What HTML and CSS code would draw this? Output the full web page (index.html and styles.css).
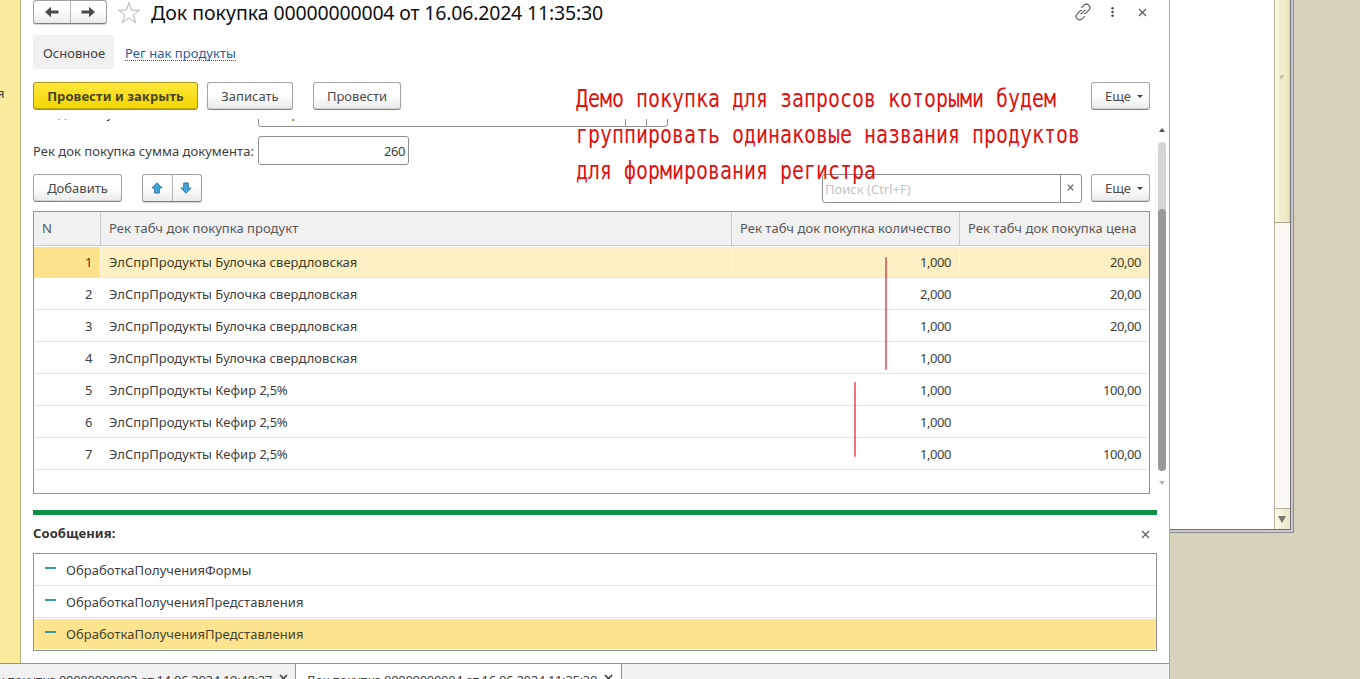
FILE: index.html
```html
<!DOCTYPE html>
<html lang="ru">
<head>
<meta charset="utf-8">
<title>Док покупка</title>
<link rel="stylesheet" href="styles.css">
</head>
<body>
<div class="desktop">
  <div class="app">
    <div class="app-main">
      <aside class="side"><span>я</span></aside>
      <main class="form">
        <header class="title-row">
          <div class="pair nav">
            <button><svg width="16" height="12" viewBox="0 0 16 12"><path d="M1 6 7 .8v3.700h7.500v3H7v3.700z"/></svg></button>
            <button><svg width="16" height="12" viewBox="0 0 16 12"><path d="M15 6 9 .8v3.700H1.500v3H9v3.700z"/></svg></button>
          </div>
          <svg class="star" width="24" height="24" viewBox="0 0 24 24"><path d="M12 1.500 14.600 9.200H22.600L16.200 14 18.700 21.800 12 17 5.300 21.800 7.800 14 1.400 9.200H9.400z"/></svg>
          <h1>Док покупка <span>00000000004 от 16.06.2024 11:35:30</span></h1>
          <div class="tools">
            <svg width="18" height="18" viewBox="0 0 18 18" class="line"><path d="M7.200 4.800 10 2.200a3.300 3.300 0 0 1 4.900.1 3.300 3.300 0 0 1 .1 4.600l-2.800 2.900q-.8.8-2.200.9M10.800 13.200 8 15.800a3.300 3.300 0 0 1-4.900-.1 3.300 3.300 0 0 1-.1-4.600l2.800-2.900q.8-.8 2.200-.9M6.700 11.300l4.600-4.600"/></svg>
            <svg width="6" height="14" viewBox="0 0 6 14"><circle cx="3" cy="2.500" r="1.500"/><circle cx="3" cy="7" r="1.500"/><circle cx="3" cy="11.500" r="1.500"/></svg>
            <svg width="9" height="9" viewBox="0 0 9 9" class="line"><path d="M1 1l7 7M8 1 1 8"/></svg>
          </div>
        </header>
        <nav class="sections"><span class="current">Основное</span><a>Рег нак продукты</a></nav>
        <div class="commands">
          <button class="btn primary">Провести и закрыть</button>
          <button class="btn write">Записать</button>
          <button class="btn post">Провести</button>
          <button class="btn more">Еще<i class="caret"></i></button>
        </div>
        <div class="scroll-area">
          <div class="body">
            <div class="cut">
              <span class="cut-label">Рек док покупка:</span>
              <div class="cut-field"><span>Контрагент</span><i></i><i></i></div>
            </div>
            <div class="field"><label>Рек док покупка сумма документа:</label><div class="input">260</div></div>
            <div class="table-tools">
              <button class="btn add">Добавить</button>
              <div class="pair move">
                <button><svg width="12" height="12" viewBox="0 0 13 13"><path d="M6.500 .8 12 6.500H9v5.500H4V6.500H1z"/></svg></button>
                <button><svg width="12" height="12" viewBox="0 0 13 13"><path d="M6.500 12.200 12 6.500H9V1H4v5.500H1z"/></svg></button>
              </div>
              <div class="search"><span>Поиск (Ctrl+F)</span><b><svg width="7" height="7" viewBox="0 0 7 7" class="line"><path d="M.7.7l5.600 5.600M6.300.7.7 6.300"/></svg></b></div>
              <button class="btn more">Еще<i class="caret"></i></button>
            </div>
            <div class="table">
              <div class="tr head"><div>N</div><div>Рек табч док покупка продукт</div><div>Рек табч док покупка количество</div><div>Рек табч док покупка цена</div></div>
              <div class="tr active"><div>1</div><div>ЭлСпрПродукты Булочка свердловская</div><div>1,000</div><div>20,00</div></div>
              <div class="tr"><div>2</div><div>ЭлСпрПродукты Булочка свердловская</div><div>2,000</div><div>20,00</div></div>
              <div class="tr"><div>3</div><div>ЭлСпрПродукты Булочка свердловская</div><div>1,000</div><div>20,00</div></div>
              <div class="tr"><div>4</div><div>ЭлСпрПродукты Булочка свердловская</div><div>1,000</div><div></div></div>
              <div class="tr"><div>5</div><div>ЭлСпрПродукты Кефир <span>2,5%</span></div><div>1,000</div><div>100,00</div></div>
              <div class="tr"><div>6</div><div>ЭлСпрПродукты Кефир <span>2,5%</span></div><div>1,000</div><div></div></div>
              <div class="tr"><div>7</div><div>ЭлСпрПродукты Кефир <span>2,5%</span></div><div>1,000</div><div>100,00</div></div>
            </div>
          </div>
          <div class="scrollbar"><i class="up"></i><div class="track"><div class="thumb"></div></div><i class="down"></i></div>
        </div>
        <section class="messages">
          <div class="messages-head"><b>Сообщения:</b><svg width="9" height="9" viewBox="0 0 9 9" class="line"><path d="M1 1l7 7M8 1 1 8"/></svg></div>
          <div class="list">
            <div class="msg"><i></i>ОбработкаПолученияФормы</div>
            <div class="msg"><i></i>ОбработкаПолученияПредставления</div>
            <div class="msg selected"><i></i>ОбработкаПолученияПредставления</div>
          </div>
        </section>
      </main>
    </div>
    <footer class="tabs">
      <div class="tab first"><span>Док покупка 00000000003 от 14.06.2024 19:48:27</span><svg width="9" height="9" viewBox="0 0 9 9"><path d="M1 1l7 7M8 1 1 8"/></svg></div>
      <div class="tab open"><span>Док покупка 00000000004 от 16.06.2024 11:35:30</span><svg width="9" height="9" viewBox="0 0 9 9"><path d="M1 1l7 7M8 1 1 8"/></svg></div>
    </footer>
  </div>
  <div class="back-window">
    <div class="back-inner"><div class="old-scroll"><div class="old-thumb"><i></i></div><div class="old-arrow"><i></i></div></div></div>
  </div>
  <p class="note">Демо покупка для запросов которыми будем<br>группировать одинаковые названия продуктов<br>для формирования регистра</p>
  <i class="mark mark-a"></i><i class="mark mark-b"></i>
</div>
</body>
</html>
```

FILE: styles.css
```css
* { box-sizing: border-box; }
body { margin: 0; overflow: hidden; font: 13px/18px "Noto Sans", sans-serif; color: #404040; }
button { font: inherit; color: inherit; padding: 0; margin: 0; }
svg { display: block; flex: none; fill: #4a4a4a; }
.line { fill: none; stroke: #555; stroke-width: 1.1; }
.desktop { position: relative; display: flex; width: 1360px; height: 679px; overflow: hidden; background: #d7d2bb; }

.app { display: flex; flex-direction: column; width: 1170px; height: 679px; flex: none; background: #fff; border-right: 1px solid #b5aa74; overflow: hidden; }
.app-main { display: flex; height: 663px; flex: none; }
.side { width: 21px; padding-top: 84px; background: #faec9e; border-right: 1px solid #b5ad78; overflow: hidden; }
.side span { display: block; width: 8px; margin-left: -3px; }
.form { display: flex; flex-direction: column; width: 1148px; padding-left: 12px; }

.title-row { display: flex; height: 25px; }
.pair { display: flex; border: 1px solid #a0a0a0; border-bottom-color: #808080; border-radius: 3px; background: linear-gradient(#fff 40%, #ebebeb); box-shadow: 0 1px 0 #d5d5d5; }
.pair button { flex: 1; display: flex; align-items: center; justify-content: center; border: 0; background: none; }
.pair button + button { border-left: 1px solid #b4b4b4; }
.nav { width: 74px; height: 24px; }
.star { margin: 1px 0 0 10px; fill: none; stroke: #b5b5b5; stroke-width: 1; }
h1 { margin: 0 0 0 10px; font-size: 19.5px; line-height: 26px; font-weight: 400; color: #111; white-space: nowrap; }
h1 span { letter-spacing: -.18px; }
.tools { display: flex; align-items: center; margin-left: auto; margin-right: 22px; height: 24px; gap: 17px; }
.tools svg:nth-child(2) { width: 5px; margin-left: 1px; }
.tools svg:last-child { margin-left: 6px; }

.sections { display: flex; align-items: center; height: 34px; margin-top: 10px; }
.current { width: 81px; height: 34px; line-height: 36px; text-align: center; padding-left: 1px; background: #f1f1f1; border-radius: 3px; }
.sections a { margin: 3px 0 0 11px; line-height: 14px; letter-spacing: .05px; color: #2d5c96; border-bottom: 1px dotted #2d5c96; }

.commands { display: flex; margin-top: 13px; width: 1117px; height: 28px; }
.btn { height: 28px; border: 1px solid #a5a5a5; border-bottom-color: #858585; border-radius: 3px; background: linear-gradient(#fff 45%, #ebebeb); box-shadow: inset 0 -1px 0 #d2d2d2; color: #4b4b4b; white-space: nowrap; }
.primary { width: 165px; font-weight: 700; letter-spacing: .08px; color: #4a4416; background: linear-gradient(#ffe83c, #f2d500); border-color: #a4941c; box-shadow: inset 0 -1px 0 #c1aa0c; }
.write { width: 86px; margin-left: 9px; }
.post { width: 88px; margin-left: 20px; }
.more { width: 59px; margin-left: auto; padding-left: 7px; }
.caret { display: inline-block; margin: 0 0 3px 6px; border: 3px solid transparent; border-top-color: #444; border-bottom: 0; }

.scroll-area { display: flex; margin-top: 9px; height: 375px; }
.body { width: 1117px; }
.cut { display: flex; height: 8px; overflow: hidden; align-items: flex-end; }
.cut-label { width: 225px; height: 18px; margin-bottom: 5px; }
.cut-field { display: flex; width: 410px; height: 28px; flex: none; border: 1px solid #8e8e8e; border-radius: 3px; padding-left: 3px; }
.cut-field span { margin-right: auto; margin-top: 4px; height: 18px; }
.cut-field i { width: 21px; border-left: 1px solid #8e8e8e; }
.field { display: flex; align-items: center; height: 29px; margin-top: 9px; }
.field label { width: 225px; white-space: nowrap; letter-spacing: .03px; }
.input { width: 151px; height: 29px; border: 1px solid #8e8e8e; border-radius: 3px; text-align: right; padding: 5px 3px 0; letter-spacing: -.45px; }
.table-tools { display: flex; margin-top: 9px; height: 29px; }
.table-tools .btn { height: 28px; }
.add { width: 89px; }
.move { width: 60px; height: 28px; margin-left: 20px; }
.move svg { margin-right: 1px; fill: #42a5dc; stroke: #2e719d; stroke-width: 1; }
.search { display: flex; width: 260px; height: 29px; margin-left: auto; border: 1px solid #8e8e8e; border-radius: 3px; }
.search span { flex: 1; padding: 5px 2px; color: #c4c4c4; }
.search b { display: flex; width: 21px; justify-content: center; padding: 9px 2px 0 0; border-left: 1px solid #8e8e8e; }
.table-tools .more { margin-left: 9px; }

.table { height: 283px; margin-top: 8px; border: 1px solid #929292; }
.tr { display: grid; grid-template-columns: 67px 631px 228px 189px; height: 32px; border-bottom: 1px solid #e2e2e2; line-height: 32px; white-space: nowrap; }
.tr > div { padding: 0 8px; text-align: right; letter-spacing: -.45px; }
.tr > div:first-child { padding-right: 9px; }
.tr > div:nth-child(2) { text-align: left; letter-spacing: .04px; }
.tr > div:nth-child(2) span { letter-spacing: -.35px; }
.tr > div:nth-child(3) { padding-right: 9px; }
.tr.head { height: 34px; background: #f1f1f1; border-bottom-color: #c9c9c9; color: #575757; line-height: 33px; }
.tr.head > div { text-align: left; border-right: 1px solid #c9c9c9; padding-right: 0; letter-spacing: .04px; }
.tr.head > div:last-child { border-right: 0; }
.tr.active { padding: 1px 0; color: #3f3b25; line-height: 30px; }
.tr.active > div { background: #fcf0c4; border-right: 1px solid #fff8e0; }
.tr.active > div:first-child, .tr.active > div:nth-child(3) { padding-right: 8px; }
.tr.active > div:last-child { border-right: 0; }
.tr.active > div:first-child { background: #fce38b; }
.scrollbar { display: flex; flex-direction: column; align-items: center; width: 8px; margin-left: 8px; padding-top: 9px; }
.up, .down { border: 3.500px solid transparent; height: 0; }
.up { border-bottom: 4px solid #555; border-top: 0; }
.down { border-top: 4px solid #b5b5b5; border-bottom: 0; margin-top: 10px; }
.track { width: 8px; height: 329px; margin-top: 10px; padding-top: 67px; border-radius: 4px; background: #d5d5d5; }
.thumb { height: 262px; border-radius: 4px; background: #999; }

.messages { width: 1124px; margin-top: 16px; border-top: 5px solid #109149; }
.messages-head { display: flex; justify-content: space-between; height: 38px; padding: 9px 7px 0 0; }
.messages-head svg { margin-top: 6px; }
.messages-head b { color: #333; letter-spacing: .1px; }
.list { height: 98px; border: 1px solid #929292; }
.msg { display: flex; align-items: center; height: 32px; padding-left: 11px; border-bottom: 1px solid #e2e2e2; letter-spacing: .06px; }
.msg i { width: 11px; height: 2px; margin: -3px 10px 0 0; background: #369da5; }
.msg.selected { height: 30px; margin-top: 1px; border: 0; background: #fde58f; color: #44402a; }
.msg.selected i { margin-top: -5px; }

.tabs { display: flex; height: 16px; border-top: 1px solid #929292; background: #f1f1f1; overflow: hidden; }
.tab { display: flex; padding-top: 7px; height: 40px; white-space: nowrap; letter-spacing: -.31px; }
.tab svg { margin: 3px 0 0 7px; fill: none; stroke: #444; stroke-width: 1.700; }
.first { width: 295px; justify-content: flex-end; padding-right: 7px; }
.open { width: 327px; padding-left: 10px; border: solid #929292; border-width: 0 1px; background: #fff; }

.back-window { width: 124px; height: 533px; padding: 0 2px 2px 0; background: #cbc9ca; border: solid #8c8a92; border-width: 0 1px 1px 0; }
.back-inner { display: flex; justify-content: flex-end; height: 530px; background: #fff; border: solid #706e78; border-width: 0 1px 1px 0; }
.old-scroll { display: flex; flex-direction: column; justify-content: space-between; width: 16px; background: #fafaf3; border-left: 1px solid #b6b19c; }
.old-thumb { height: 223px; padding: 75px 0 0 5px; background: linear-gradient(90deg, #fafae8, #f1efd2 30%, #eeebc7 75%, #dedab1); border-bottom: 1px solid #aaa58d; }
.old-thumb i { display: block; width: 4px; height: 4px; border: solid #c6c3a5; border-width: 2px 0 0 2px; }
.old-arrow { height: 21px; padding: 7px 0 0 3px; background: linear-gradient(90deg, #fafae8, #e9e6c6); border-top: 1px solid #b6b19c; }
.old-arrow i { display: block; width: 0; border: 4px solid transparent; border-top: 7px solid #77746a; border-bottom: 0; }

/* Annotations drawn over the windows */
.note { position: absolute; left: 576px; top: 81px; margin: 0; font: 24px/36px "DejaVu Sans Mono", monospace; color: #e01212; white-space: nowrap; transform: scaleX(.8305); transform-origin: 0 0; }
.mark { position: absolute; width: 2px; background: rgba(228, 50, 60, .68); border-radius: 1px; }
.mark-a { left: 885px; top: 257px; height: 113px; }
.mark-b { left: 854px; top: 382px; height: 75px; }
```
